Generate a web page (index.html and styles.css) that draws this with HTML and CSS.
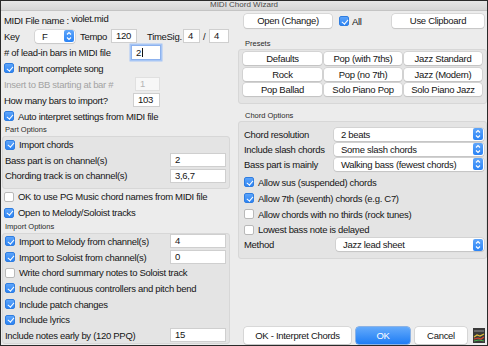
FILE: index.html
```html
<!DOCTYPE html>
<html lang="en">
<head>
  <meta charset="UTF-8" />
  <title>MIDI Chord Wizard</title>
  <link rel="stylesheet" href="styles.css">
</head>
<body>
  <div class="window">
    <div class="titlebar">MIDI Chord Wizard</div>
    <div class="content">

      <div class="col-left">
        <div class="row"><span>MIDI File name :&nbsp;</span><span class="fname">violet.mid</span></div>
        <div class="row">
          <span class="key-lbl">Key</span>
          <span class="select key-select">
            <span class="select-val">F</span>
            <span class="stepper"><svg width="10" height="12" viewBox="0 0 10 12"><path d="M3 4.5 L5 2.5 L7 4.5 M3 7.5 L5 9.5 L7 7.5" fill="none" stroke="#fff" stroke-width="1.2"/></svg></span>
          </span>
          <span class="tempo-lbl">Tempo</span>
          <span class="input tempo-in">120</span>
          <span class="ts-lbl">TimeSig.</span>
          <span class="input ts-in">4</span>
          <span class="slash">/</span>
          <span class="input ts-in2">4</span>
        </div>
        <div class="row">
          <span class="lead-lbl"># of lead-in bars in MIDI file</span>
          <span class="input lead-in focus">2<span class="caret"></span></span>
        </div>
        <div class="row"><span class="cb on"></span>Import complete song</div>
        <div class="row disabled">
          <span class="insert-lbl">Insert to BB starting at bar #</span>
          <span class="input insert-in">1</span>
        </div>
        <div class="row">
          <span class="bars-lbl">How many bars to import?</span>
          <span class="input bars-in">103</span>
        </div>
        <div class="row"><span class="cb on"></span>Auto interpret settings from MIDI file</div>

        <div class="group-title">Part Options</div>
        <div class="group part-group">
          <div class="grow"><span class="cb on"></span>Import chords</div>
          <div class="grow">Bass part is on channel(s)<span class="input chan-in">2</span></div>
          <div class="grow">Chording track is on channel(s)<span class="input chan-in">3,6,7</span></div>
        </div>

        <div class="row"><span class="cb"></span>OK to use PG Music chord names from MIDI file</div>
        <div class="row"><span class="cb on"></span>Open to Melody/Soloist tracks</div>

        <div class="group-title">Import Options</div>
        <div class="group import-group">
          <div class="irow"><span class="cb on"></span>Import to Melody from channel(s)<span class="input chan-in">4</span></div>
          <div class="irow"><span class="cb on"></span>Import to Soloist from channel(s)<span class="input chan-in">0</span></div>
          <div class="irow"><span class="cb"></span>Write chord summary notes to Soloist track</div>
          <div class="irow"><span class="cb on"></span>Include continuous controllers and pitch bend</div>
          <div class="irow"><span class="cb on"></span>Include patch changes</div>
          <div class="irow"><span class="cb on"></span>Include lyrics</div>
          <div class="irow">Include notes early by (120 PPQ)<span class="input chan-in">15</span></div>
        </div>
      </div>

      <div class="col-right">
        <div class="top-row">
          <span class="btn open-btn">Open (Change)</span>
          <span class="all-box"><span class="cb on"></span>All</span>
          <span class="btn clip-btn">Use Clipboard</span>
        </div>

        <div class="group-title presets-title">Presets</div>
        <div class="group presets">
          <span class="btn">Defaults</span>
          <span class="btn">Pop (with 7ths)</span>
          <span class="btn">Jazz Standard</span>
          <span class="btn">Rock</span>
          <span class="btn">Pop (no 7th)</span>
          <span class="btn">Jazz (Modern)</span>
          <span class="btn">Pop Ballad</span>
          <span class="btn">Solo Piano Pop</span>
          <span class="btn">Solo Piano Jazz</span>
        </div>

        <div class="group-title chord-title">Chord Options</div>
        <div class="group chord-group">
          <div class="srow">
            <span class="opt-lbl">Chord resolution</span>
            <span class="select wide-select"><span class="select-val">2 beats</span><span class="stepper"><svg width="10" height="12" viewBox="0 0 10 12"><path d="M3 4.5 L5 2.5 L7 4.5 M3 7.5 L5 9.5 L7 7.5" fill="none" stroke="#fff" stroke-width="1.2"/></svg></span></span>
          </div>
          <div class="srow">
            <span class="opt-lbl">Include slash chords</span>
            <span class="select wide-select"><span class="select-val">Some slash chords</span><span class="stepper"><svg width="10" height="12" viewBox="0 0 10 12"><path d="M3 4.5 L5 2.5 L7 4.5 M3 7.5 L5 9.5 L7 7.5" fill="none" stroke="#fff" stroke-width="1.2"/></svg></span></span>
          </div>
          <div class="srow">
            <span class="opt-lbl">Bass part is mainly</span>
            <span class="select wide-select"><span class="select-val">Walking bass (fewest chords)</span><span class="stepper"><svg width="10" height="12" viewBox="0 0 10 12"><path d="M3 4.5 L5 2.5 L7 4.5 M3 7.5 L5 9.5 L7 7.5" fill="none" stroke="#fff" stroke-width="1.2"/></svg></span></span>
          </div>
          <div class="crow first"><span class="cb on"></span>Allow sus (suspended) chords</div>
          <div class="crow"><span class="cb on"></span>Allow 7th (seventh) chords (e.g. C7)</div>
          <div class="crow"><span class="cb"></span>Allow chords with no thirds (rock tunes)</div>
          <div class="crow short"><span class="cb"></span>Lowest bass note is delayed</div>
          <div class="srow">
            <span class="opt-lbl method-lbl">Method</span>
            <span class="select method-select"><span class="select-val">Jazz lead sheet</span><span class="stepper"><svg width="10" height="12" viewBox="0 0 10 12"><path d="M3 4.5 L5 2.5 L7 4.5 M3 7.5 L5 9.5 L7 7.5" fill="none" stroke="#fff" stroke-width="1.2"/></svg></span></span>
          </div>
        </div>

        <div class="bottom-row">
          <span class="btn interp-btn">OK - Interpret Chords</span>
          <span class="btn ok-btn">OK</span>
          <span class="btn cancel-btn">Cancel</span>
          <svg class="app-icon" width="12" height="15" viewBox="0 0 12 15">
            <rect x="0" y="0" width="12" height="15" fill="#3a3a3a"/>
            <rect x="1" y="2" width="10" height="2" fill="#6a6a6a"/>
            <path d="M1 9 L4 7 L7 8 L11 6" stroke="#e2c23a" stroke-width="1.2" fill="none"/>
            <path d="M1 11 L5 10 L8 11 L11 9" stroke="#d9442f" stroke-width="1.2" fill="none"/>
            <path d="M1 13 L6 12 L11 13" stroke="#4caf50" stroke-width="1" fill="none"/>
          </svg>
        </div>
      </div>

    </div>
  </div>
</body>
</html>
```

FILE: styles.css
```css
html, body {
  margin: 0;
  padding: 0;
}
body {
  font-family: 'Liberation Sans', Arial, sans-serif;
  font-size: 9.5px;
  letter-spacing: -0.3px;
  color: #151515;
  background-color: #ececec;
}
.window {
  width: 486px;
  height: 344px;
  border: 1px solid #2a2a2a;
  background-color: #ececec;
  overflow: hidden;
  display: flex;
  flex-direction: column;
}
.titlebar {
  height: 9px;
  line-height: 8px;
  font-size: 8px;
  letter-spacing: 0;
  text-align: center;
  color: #4a4a4a;
  background: linear-gradient(#e6e6e6, #d6d6d6);
  border-bottom: 1px solid #c4c4c4;
  overflow: hidden;
}
.content {
  flex: 1;
  display: flex;
  gap: 7px;
  min-height: 0;
}

/* left column */
.col-left {
  width: 228px;
  padding: 1px 1px 0 1px;
  display: flex;
  flex-direction: column;
}
.row {
  height: 16px;
  display: flex;
  align-items: center;
  padding-left: 2px;
  white-space: nowrap;
}
.fname {
  position: relative;
  top: -2px;
}
.key-lbl { width: 31px; }
.tempo-lbl { width: 31px; margin-left: 5px; }
.ts-lbl { width: 36px; margin-left: 10px; }
.slash { width: 6px; margin-left: 3px; }
.lead-lbl { width: 127px; }
.insert-lbl { width: 131px; }
.bars-lbl { width: 129px; }
.disabled { color: #a3a3a3; }

.input {
  box-sizing: border-box;
  height: 14px;
  line-height: 12px;
  padding-left: 4px;
  background-color: white;
  border: 1px solid #cfcfcf;
  white-space: nowrap;
}
.tempo-in { width: 26px; }
.ts-in { width: 17px; }
.ts-in2 { width: 20px; }
.lead-in {
  width: 30px;
  height: 15px;
  line-height: 13px;
  border-color: #8db2ee;
  box-shadow: 0 0 0 1.5px #a7c6f5;
}
.caret {
  display: inline-block;
  width: 1px;
  height: 9px;
  background-color: #111;
  vertical-align: middle;
  margin-left: 1px;
}
.insert-in {
  width: 25px;
  background-color: #f7f7f7;
  border-color: #e0e0e0;
  color: #b5b5b5;
}
.bars-in { width: 27px; }
.chan-in {
  width: 56px;
  margin-left: auto;
  margin-right: 3px;
}

.select {
  box-sizing: border-box;
  height: 13px;
  display: flex;
  align-items: center;
  background-color: white;
  border-radius: 3px;
  box-shadow: 0 0 0 0.5px #c2c2c2, 0 1px 1px rgba(0, 0, 0, 0.12);
}
.select-val {
  flex: 1;
  padding-left: 7px;
}
.stepper {
  width: 10px;
  height: 12px;
  margin-right: 1px;
  background: linear-gradient(#5ea5fa, #2a83f5);
  border-radius: 2px;
  display: flex;
}
.key-select { width: 40px; }

.cb {
  box-sizing: border-box;
  width: 10px;
  height: 10px;
  margin-right: 4px;
  border-radius: 2px;
  background-color: white;
  border: 1px solid #b9b9b9;
  position: relative;
  flex: none;
}
.cb.on {
  background: linear-gradient(#5da4fa, #2c84f4);
  border-color: #2f7de0;
}
.cb.on::after {
  content: '';
  position: absolute;
  left: 2.5px;
  top: 0.5px;
  width: 2.5px;
  height: 5px;
  border: solid white;
  border-width: 0 1.5px 1.5px 0;
  transform: rotate(40deg);
}

.group-title {
  height: 12px;
  line-height: 12px;
  font-size: 7.5px;
  letter-spacing: 0;
  padding-left: 3px;
  color: #2a2a2a;
}
.group {
  background-color: #e4e4e4;
  border: 1px solid #d7d7d7;
  border-radius: 3px;
}
.part-group {
  padding: 0 0 4px 1px;
}
.grow {
  height: 15.5px;
  display: flex;
  align-items: center;
  padding-left: 1px;
  white-space: nowrap;
}
.import-group {
  padding: 0 0 0 1px;
  flex: none;
}
.irow {
  height: 15.7px;
  display: flex;
  align-items: center;
  padding-left: 1px;
  white-space: nowrap;
}

/* right column */
.col-right {
  width: 249px;
  display: flex;
  flex-direction: column;
}
.top-row {
  display: flex;
  align-items: center;
  padding: 3px 3px 0 6px;
  height: 14px;
}
.btn {
  box-sizing: border-box;
  height: 14px;
  line-height: 14px;
  text-align: center;
  background-color: white;
  border-radius: 3px;
  box-shadow: 0 0 0 0.5px #c4c4c4, 0 1px 1px rgba(0, 0, 0, 0.15);
  white-space: nowrap;
}
.open-btn { width: 88px; }
.all-box {
  display: flex;
  align-items: center;
  margin-left: 7px;
}
.all-box .cb { margin-right: 3px; }
.clip-btn {
  width: 92px;
  margin-left: auto;
}
.presets-title {
  margin-top: 11px;
  height: 10px;
  line-height: 10px;
  padding-left: 7px;
}
.presets {
  display: grid;
  grid-template-columns: 79px 78px 78px;
  grid-auto-rows: 13px;
  column-gap: 2px;
  row-gap: 2.5px;
  padding: 2px 0 7px 4px;
}
.presets .btn {
  height: 13px;
  line-height: 13px;
}
.chord-title {
  margin-top: 7px;
  padding-left: 7px;
  height: 10px;
  line-height: 10px;
}
.chord-group {
  padding: 4.5px 0 6px 5px;
}
.srow {
  height: 15px;
  display: flex;
  align-items: center;
  white-space: nowrap;
}
.opt-lbl { width: 90px; }
.method-lbl { width: 92px; }
.wide-select { width: 150px; }
.method-select { width: 148px; }
.crow {
  height: 16px;
  display: flex;
  align-items: center;
  white-space: nowrap;
}
.crow.first { margin-top: 2.5px; }
.crow.short { height: 15px; }

.bottom-row {
  margin-top: auto;
  display: flex;
  align-items: flex-end;
  padding: 0 0 1px 6px;
}
.bottom-row .btn {
  height: 17px;
  line-height: 17px;
}
.interp-btn { width: 107px; }
.ok-btn {
  width: 54px;
  margin-left: 5px;
  color: white;
  background: linear-gradient(#64aafb, #1e7df5);
  box-shadow: 0 0 0 0.5px #2a78dd;
}
.cancel-btn {
  width: 52px;
  margin-left: 5px;
}
.app-icon {
  margin-left: 6px;
  margin-bottom: 1px;
}
```
